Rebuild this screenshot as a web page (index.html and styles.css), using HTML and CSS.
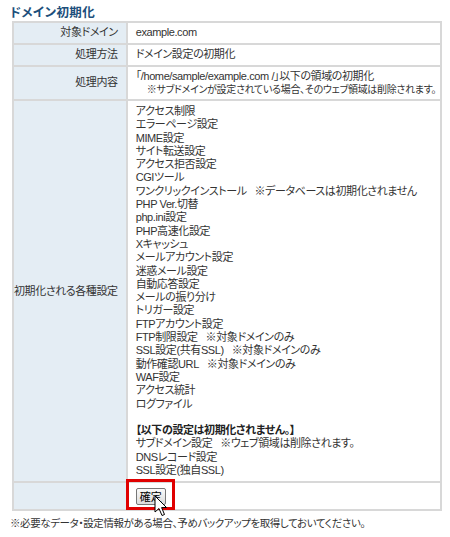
FILE: index.html
```html
<!DOCTYPE html>
<html lang="ja">
<head>
  <meta charset="UTF-8">
  <title>ドメイン初期化</title>
  <link rel="stylesheet" href="styles.css">
</head>
<body>
  <h2 class="page-title">ドメイン初期化</h2>
  <table class="init-table">
    <tr class="row-short">
      <th>対象ドメイン</th>
      <td>example.com</td>
    </tr>
    <tr class="row-short">
      <th>処理方法</th>
      <td>ドメイン設定の初期化</td>
    </tr>
    <tr class="row-detail">
      <th>処理内容</th>
      <td class="lines">「/home/sample/example.com /」以下の領域の初期化<br>
        <span class="sub-note">※サブドメインが設定されている場合、そのウェブ領域は削除されます。</span></td>
    </tr>
    <tr>
      <th>初期化される各種設定</th>
      <td class="lines list-cell">
        アクセス制限<br>
        エラーページ設定<br>
        MIME設定<br>
        サイト転送設定<br>
        アクセス拒否設定<br>
        CGIツール<br>
        ワンクリックインストール&nbsp;&nbsp;&nbsp;※データベースは初期化されません<br>
        PHP Ver.切替<br>
        php.ini設定<br>
        PHP高速化設定<br>
        Xキャッシュ<br>
        メールアカウント設定<br>
        迷惑メール設定<br>
        自動応答設定<br>
        メールの振り分け<br>
        トリガー設定<br>
        FTPアカウント設定<br>
        FTP制限設定&nbsp;&nbsp;&nbsp;※対象ドメインのみ<br>
        SSL設定(共有SSL)&nbsp;&nbsp;&nbsp;※対象ドメインのみ<br>
        動作確認URL&nbsp;&nbsp;&nbsp;※対象ドメインのみ<br>
        WAF設定<br>
        アクセス統計<br>
        ログファイル<br>
        <br>
        <b>【以下の設定は初期化されません。】</b><br>
        サブドメイン設定&nbsp;&nbsp;&nbsp;※ウェブ領域は削除されます。<br>
        DNSレコード設定<br>
        SSL設定(独自SSL)
      </td>
    </tr>
    <tr class="row-button">
      <th></th>
      <td class="button-cell">
        <button type="button" class="confirm-button">確定</button>
        <span class="highlight-box"></span>
        <svg class="cursor" width="14" height="22" viewBox="0 0 14 22">
          <path d="M1 1 L1 17 L5 13.5 L8 20.5 L10.5 19.5 L7.6 12.6 L12.5 12.5 Z" fill="#fff" stroke="#000" stroke-width="1" stroke-linejoin="miter"/>
        </svg>
      </td>
    </tr>
  </table>
  <p class="footer-note">※必要なデータ・設定情報がある場合、予めバックアップを取得しておいてください。</p>
</body>
</html>
```

FILE: styles.css
```css
body {
  margin: 0;
  padding: 5px 10px 0 10px;
  font-family: "Liberation Sans", "Noto Sans CJK JP", sans-serif;
  font-size: 11px;
  line-height: 13px;
  color: #333;
  background-color: #fff;
  font-feature-settings: "palt";
  letter-spacing: -0.4px;
}

.page-title {
  margin: 0;
  font-size: 12.5px;
  font-weight: bold;
  color: #1d4f7c;
  line-height: 16px;
  height: 16px;
  letter-spacing: 0.4px;
}

.init-table {
  margin-left: 2px;
  width: 426px;
  border-collapse: collapse;
  border: 2px solid #d2d2d2;
}

.init-table th,
.init-table td {
  border: 2px solid #d8d8d8;
  line-height: 13.3px;
  vertical-align: middle;
}

.init-table th {
  width: 101px;
  padding: 0 8px 0 0;
  background-color: #e4edf4;
  font-weight: normal;
  text-align: right;
  white-space: nowrap;
  color: #333;
}

.init-table td {
  padding: 0 4px 0 8px;
  text-align: left;
}

.row-short th,
.row-short td {
  height: 20px;
}

.row-detail td {
  height: 32px;
}

.sub-note {
  padding-left: 11px;
  font-size: 10px;
  letter-spacing: -0.3px;
  white-space: nowrap;
}

.list-cell {
  padding-top: 4px !important;
  padding-bottom: 4px !important;
}

.list-cell b {
  color: #222;
}

.row-button th,
.row-button td {
  height: 26px;
}

.button-cell {
  position: relative;
}

.confirm-button {
  font-family: "Noto Sans CJK JP", sans-serif;
  font-size: 11px;
  line-height: 13px;
  padding: 1px 3px;
  border: 1px solid #777;
  border-radius: 2px;
  background: linear-gradient(#fafafa, #dcdcdc);
  color: #000;
  letter-spacing: 0;
}

.highlight-box {
  position: absolute;
  left: -2px;
  top: -4px;
  width: 43px;
  height: 25px;
  border: 3px solid #e00000;
  pointer-events: none;
}

.cursor {
  position: absolute;
  left: 26px;
  top: 12px;
}

.footer-note {
  margin: 5px 0 0 0;
  font-size: 10.5px;
  line-height: 14px;
}
```
